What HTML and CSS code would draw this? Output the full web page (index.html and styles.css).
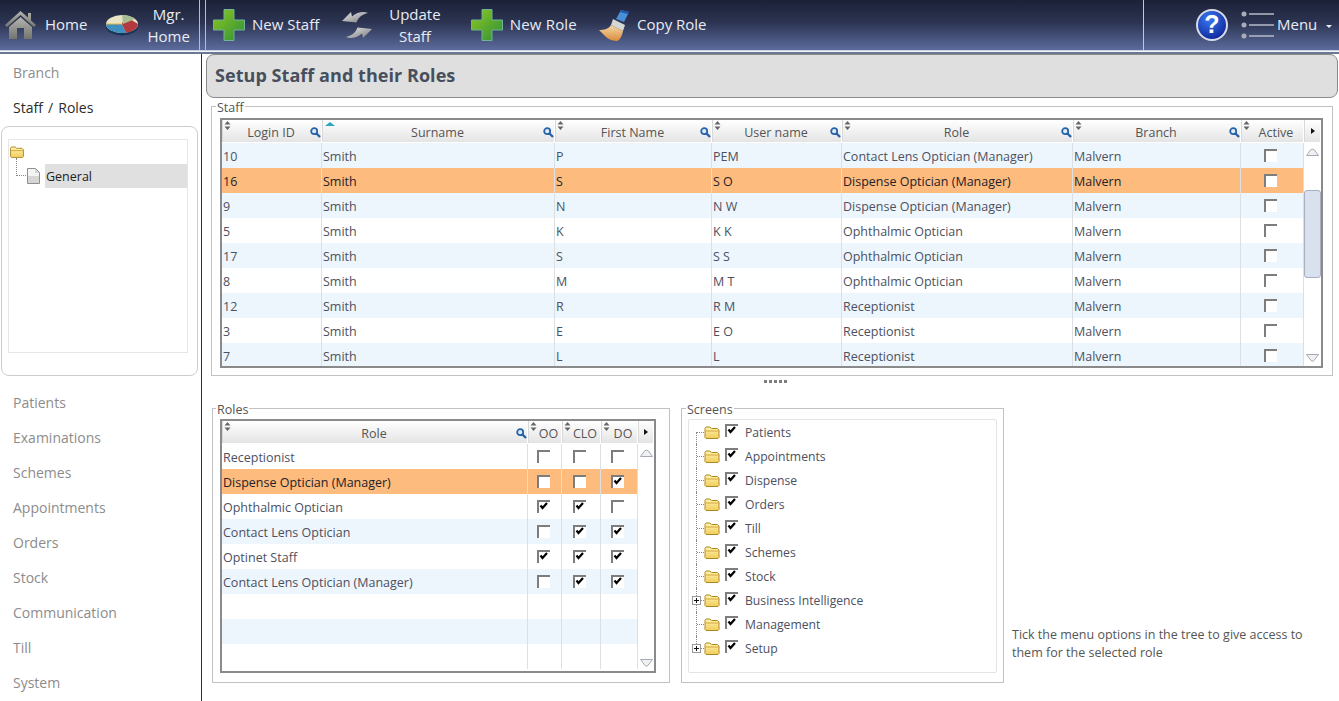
FILE: index.html
```html
<!DOCTYPE html>
<html lang="en">
<head>
<meta charset="utf-8">
<title>Setup Staff and their Roles</title>
<link rel="stylesheet" href="styles.css">
</head>
<body>
<svg class="defs" aria-hidden="true">
  <defs>
    <linearGradient id="gGreen" x1="0" y1="0" x2="1" y2="1"><stop offset="0" stop-color="#8cc820"/><stop offset="1" stop-color="#2f8f3a"/></linearGradient>
    <linearGradient id="gHome" x1="0" y1="0" x2="0" y2="1"><stop offset="0" stop-color="#b4b4b0"/><stop offset="1" stop-color="#75756f"/></linearGradient>
    <linearGradient id="gArrow" x1="0" y1="0" x2="1" y2="1"><stop offset="0" stop-color="#e8e8e8"/><stop offset="1" stop-color="#77797d"/></linearGradient>
    <linearGradient id="gFolder" x1="0" y1="0" x2="0" y2="1"><stop offset="0" stop-color="#fff3b0"/><stop offset="1" stop-color="#f2cd5c"/></linearGradient>
    <linearGradient id="gBrush" x1="0" y1="0" x2="0" y2="1"><stop offset="0" stop-color="#f4d8a8"/><stop offset="1" stop-color="#dc8c3c"/></linearGradient>
    <radialGradient id="gHelp" cx=".4" cy=".3" r=".8"><stop offset="0" stop-color="#3a78f0"/><stop offset="1" stop-color="#0a1e90"/></radialGradient>
    <symbol id="i-plus" viewBox="0 0 32 32"><path d="M11 .5h10v10.500h10.500v10H21v10.500H11V21H.5V11H11z" fill="url(#gGreen)" stroke="#6fb39a" stroke-width="1"/></symbol>
    <symbol id="i-box" viewBox="0 0 13 13"><path d="M0 0h13v13H0z" fill="#fff"/><path d="M1 13V1h12" fill="none" stroke="#7d7d7d" stroke-width="2"/></symbol>
    <symbol id="i-check" viewBox="0 0 13 13"><path d="M0 0h13v13H0z" fill="#fff"/><path d="M1 13V1h12" fill="none" stroke="#7d7d7d" stroke-width="2"/><path d="M3.500 5.500l2 2.500 4.500-5" fill="none" stroke="#000" stroke-width="2.200"/></symbol>
    <symbol id="i-folder" viewBox="0 0 16 13"><path d="M1 11.500V2.500L2 1h4l1.500 1.500h6L15 4v7.500l-1 1H2z" fill="url(#gFolder)" stroke="#b08a28"/><path d="M1.500 5h13" stroke="#d2a838" fill="none"/></symbol>
    <symbol id="i-sort" viewBox="0 0 7 9"><path d="M3.500 0L6.500 3.500H.5zM3.500 9L.5 5.500h6z" fill="#666"/></symbol>
    <symbol id="i-mag" viewBox="0 0 11 11"><circle cx="4.200" cy="4.200" r="3" fill="#dcecf8" stroke="#2a62a8" stroke-width="1.800"/><path d="M6.500 6.500l3.500 3.500" stroke="#2a62a8" stroke-width="2.400"/></symbol>
    <symbol id="i-up" viewBox="0 0 13 8"><path d="M.5 7.500L4.500 2Q6.500 0 8.500 2l4 5.500z" fill="#eef0f4" stroke="#a6a9b2"/></symbol>
    <symbol id="i-down" viewBox="0 0 13 8"><path d="M.5.500h12L8 6.500Q6.500 8 5 6.500z" fill="#eef0f4" stroke="#a6a9b2"/></symbol>
  </defs>
</svg>

<header class="topbar">
  <nav class="group group-home">
    <a class="tool tool-home">
      <svg class="icon32" viewBox="0 0 32 32"><path d="M15.500 2L0 16l2 2L15.500 6 29 18l2-2-5-4.500V4h-3v4.500z" fill="url(#gHome)"/><path d="M4 18L15.500 8 27 18v12h-8V19h-7v11H4z" fill="url(#gHome)"/></svg>
      <span>Home</span>
    </a>
    <a class="tool tool-mgr">
      <svg class="icon32" viewBox="0 0 32 32"><ellipse cx="16" cy="17.500" rx="16" ry="9" fill="#16365a"/><ellipse cx="16" cy="15" rx="16" ry="9" fill="#e9e4c6"/><path d="M16 15L0 15a16 9 0 0 0 20 8.700z" fill="#3f8fc0"/><path d="M16 15l4 8.700A16 9 0 0 0 32 15L19 7z" fill="#b23a3e"/><path d="M16 15L0 15" stroke="#e0b93c" stroke-width="1"/><path d="M16 6l1 9 12-5a16 9 0 0 0-13-4z" fill="#a9bd92"/></svg>
      <span class="two-line">Mgr.<br>Home</span>
    </a>
  </nav>
  <nav class="group group-actions">
    <a class="tool tool-newstaff"><svg class="icon32"><use href="#i-plus"/></svg><span>New Staff</span></a>
    <a class="tool tool-update">
      <svg class="icon32" viewBox="0 0 32 32"><path d="M1 12L10 3l1 4.500C16 3 23 2 27 4c-5 1-9.500 4-11.500 9.500z" fill="url(#gArrow)"/><path d="M31 20l-9 9-1-4.500C16 29 9 30 5 28c5-1 9.500-4 11.500-9.500z" fill="url(#gArrow)"/></svg>
      <span class="two-line">Update<br>Staff</span>
    </a>
    <a class="tool tool-newrole"><svg class="icon32"><use href="#i-plus"/></svg><span>New Role</span></a>
    <a class="tool tool-copy">
      <svg class="icon32" viewBox="0 0 32 32"><path d="M22 1l8 2-5 10-8-3z" fill="#4a90d8"/><path d="M22 1l8 2-1 2-8-2z" fill="#1f56a8"/><path d="M14 10l12 6-2 6-12-6z" fill="#d6d6d4"/><path d="M12 16l12 6c-1 5-3 9-6 10-6 0-10-3-12-5L0 21c5 0 10-1 12-5z" fill="url(#gBrush)"/></svg>
      <span>Copy Role</span>
    </a>
  </nav>
  <nav class="group group-right">
    <svg class="help" viewBox="0 0 32 32"><circle cx="16" cy="16" r="15" fill="url(#gHelp)" stroke="#d8dce8" stroke-width="2"/><text x="16" y="24" text-anchor="middle" class="help-q">?</text></svg>
    <svg class="menu-icon" viewBox="0 0 33 28"><g fill="#a9adb8"><circle cx="3" cy="3" r="2.500"/><circle cx="3" cy="14" r="2.500"/><circle cx="3" cy="25" r="2.500"/></g><g stroke="#b6bac6" stroke-width="1.500"><path d="M8 3h25M8 14h25M8 25h25"/></g></svg>
    <span class="menu-label">Menu</span>
    <span class="caret"></span>
  </nav>
</header>
<div class="rule"></div>

<div class="page">
  <aside class="sidebar">
    <a class="side-item">Branch</a>
    <a class="side-item active">Staff / Roles</a>
    <div class="side-panel">
      <div class="side-tree">
        <svg class="side-folder"><use href="#i-folder"/></svg>
        <div class="side-node">
          <span class="side-elbow"></span>
          <svg class="side-page" viewBox="0 0 13 16"><path d="M.5.5h8l4 4v11H.5z" fill="#d6d6d6" stroke="#8f8f8f"/><path d="M1 1h7v4h4v3H1z" fill="#f4f4f4"/></svg>
          <span class="side-label">General</span>
        </div>
      </div>
    </div>
    <div class="side-rest">
      <a class="side-item">Patients</a>
      <a class="side-item">Examinations</a>
      <a class="side-item">Schemes</a>
      <a class="side-item">Appointments</a>
      <a class="side-item">Orders</a>
      <a class="side-item">Stock</a>
      <a class="side-item">Communication</a>
      <a class="side-item">Till</a>
      <a class="side-item">System</a>
    </div>
  </aside>

  <main class="content">
    <h1 class="title">Setup Staff and their Roles</h1>

    <fieldset class="box box-staff">
      <legend>Staff</legend>
      <div class="grid grid-staff">
        <div class="head staff-cols">
          <div class="hc"><svg class="sort"><use href="#i-sort"/></svg>Login ID<svg class="mag"><use href="#i-mag"/></svg></div>
          <div class="hc"><span class="sort-up"></span>Surname<svg class="mag"><use href="#i-mag"/></svg></div>
          <div class="hc"><svg class="sort"><use href="#i-sort"/></svg>First Name<svg class="mag"><use href="#i-mag"/></svg></div>
          <div class="hc"><svg class="sort"><use href="#i-sort"/></svg>User name<svg class="mag"><use href="#i-mag"/></svg></div>
          <div class="hc"><svg class="sort"><use href="#i-sort"/></svg>Role<svg class="mag"><use href="#i-mag"/></svg></div>
          <div class="hc"><svg class="sort"><use href="#i-sort"/></svg>Branch<svg class="mag"><use href="#i-mag"/></svg></div>
          <div class="hc hc-narrow"><svg class="sort"><use href="#i-sort"/></svg>Active</div>
          <div class="hc hc-more"><span class="more"></span></div>
        </div>
        <div class="body">
          <div class="rows rows-staff">
            <div class="row staff-cols"><span>10</span><span>Smith</span><span>P</span><span>PEM</span><span>Contact Lens Optician (Manager)</span><span>Malvern</span><span class="cb"><svg class="chk"><use href="#i-box"/></svg></span></div>
            <div class="row staff-cols sel"><span>16</span><span>Smith</span><span>S</span><span>S O</span><span>Dispense Optician (Manager)</span><span>Malvern</span><span class="cb"><svg class="chk"><use href="#i-box"/></svg></span></div>
            <div class="row staff-cols"><span>9</span><span>Smith</span><span>N</span><span>N W</span><span>Dispense Optician (Manager)</span><span>Malvern</span><span class="cb"><svg class="chk"><use href="#i-box"/></svg></span></div>
            <div class="row staff-cols"><span>5</span><span>Smith</span><span>K</span><span>K K</span><span>Ophthalmic Optician</span><span>Malvern</span><span class="cb"><svg class="chk"><use href="#i-box"/></svg></span></div>
            <div class="row staff-cols"><span>17</span><span>Smith</span><span>S</span><span>S S</span><span>Ophthalmic Optician</span><span>Malvern</span><span class="cb"><svg class="chk"><use href="#i-box"/></svg></span></div>
            <div class="row staff-cols"><span>8</span><span>Smith</span><span>M</span><span>M T</span><span>Ophthalmic Optician</span><span>Malvern</span><span class="cb"><svg class="chk"><use href="#i-box"/></svg></span></div>
            <div class="row staff-cols"><span>12</span><span>Smith</span><span>R</span><span>R M</span><span>Receptionist</span><span>Malvern</span><span class="cb"><svg class="chk"><use href="#i-box"/></svg></span></div>
            <div class="row staff-cols"><span>3</span><span>Smith</span><span>E</span><span>E O</span><span>Receptionist</span><span>Malvern</span><span class="cb"><svg class="chk"><use href="#i-box"/></svg></span></div>
            <div class="row staff-cols"><span>7</span><span>Smith</span><span>L</span><span>L</span><span>Receptionist</span><span>Malvern</span><span class="cb"><svg class="chk"><use href="#i-box"/></svg></span></div>
          </div>
          <div class="scroll">
            <svg class="arrow"><use href="#i-up"/></svg>
            <span class="thumb"></span>
            <svg class="arrow arrow-end"><use href="#i-down"/></svg>
          </div>
        </div>
      </div>
    </fieldset>

    <div class="splitter"><span class="grip"></span></div>

    <div class="lower">
      <fieldset class="box box-roles">
        <legend>Roles</legend>
        <div class="grid grid-roles">
          <div class="head role-cols">
            <div class="hc"><svg class="sort"><use href="#i-sort"/></svg>Role<svg class="mag"><use href="#i-mag"/></svg></div>
            <div class="hc hc-narrow"><svg class="sort"><use href="#i-sort"/></svg>OO</div>
            <div class="hc hc-narrow"><svg class="sort"><use href="#i-sort"/></svg>CLO</div>
            <div class="hc hc-narrow"><svg class="sort"><use href="#i-sort"/></svg>DO</div>
            <div class="hc hc-more"><span class="more"></span></div>
          </div>
          <div class="body">
            <div class="rows rows-roles">
              <div class="row role-cols"><span>Receptionist</span><span class="cb"><svg class="chk"><use href="#i-box"/></svg></span><span class="cb"><svg class="chk"><use href="#i-box"/></svg></span><span class="cb"><svg class="chk"><use href="#i-box"/></svg></span></div>
              <div class="row role-cols sel"><span>Dispense Optician (Manager)</span><span class="cb"><svg class="chk"><use href="#i-box"/></svg></span><span class="cb"><svg class="chk"><use href="#i-box"/></svg></span><span class="cb"><svg class="chk"><use href="#i-check"/></svg></span></div>
              <div class="row role-cols"><span>Ophthalmic Optician</span><span class="cb"><svg class="chk"><use href="#i-check"/></svg></span><span class="cb"><svg class="chk"><use href="#i-check"/></svg></span><span class="cb"><svg class="chk"><use href="#i-box"/></svg></span></div>
              <div class="row role-cols"><span>Contact Lens Optician</span><span class="cb"><svg class="chk"><use href="#i-box"/></svg></span><span class="cb"><svg class="chk"><use href="#i-check"/></svg></span><span class="cb"><svg class="chk"><use href="#i-check"/></svg></span></div>
              <div class="row role-cols"><span>Optinet Staff</span><span class="cb"><svg class="chk"><use href="#i-check"/></svg></span><span class="cb"><svg class="chk"><use href="#i-check"/></svg></span><span class="cb"><svg class="chk"><use href="#i-check"/></svg></span></div>
              <div class="row role-cols"><span>Contact Lens Optician (Manager)</span><span class="cb"><svg class="chk"><use href="#i-box"/></svg></span><span class="cb"><svg class="chk"><use href="#i-check"/></svg></span><span class="cb"><svg class="chk"><use href="#i-check"/></svg></span></div>
              <div class="row role-cols"><span></span><span></span><span></span><span></span></div>
              <div class="row role-cols"><span></span><span></span><span></span><span></span></div>
              <div class="row role-cols"><span></span><span></span><span></span><span></span></div>
            </div>
            <div class="scroll">
              <svg class="arrow"><use href="#i-up"/></svg>
              <svg class="arrow arrow-end"><use href="#i-down"/></svg>
            </div>
          </div>
        </div>
      </fieldset>

      <fieldset class="box box-screens">
        <legend>Screens</legend>
        <ul class="tree">
          <li class="node"><span class="elbow"></span><svg class="folder"><use href="#i-folder"/></svg><svg class="chk"><use href="#i-check"/></svg><span class="node-label">Patients</span></li>
          <li class="node"><span class="elbow"></span><svg class="folder"><use href="#i-folder"/></svg><svg class="chk"><use href="#i-check"/></svg><span class="node-label">Appointments</span></li>
          <li class="node"><span class="elbow"></span><svg class="folder"><use href="#i-folder"/></svg><svg class="chk"><use href="#i-check"/></svg><span class="node-label">Dispense</span></li>
          <li class="node"><span class="elbow"></span><svg class="folder"><use href="#i-folder"/></svg><svg class="chk"><use href="#i-check"/></svg><span class="node-label">Orders</span></li>
          <li class="node"><span class="elbow"></span><svg class="folder"><use href="#i-folder"/></svg><svg class="chk"><use href="#i-check"/></svg><span class="node-label">Till</span></li>
          <li class="node"><span class="elbow"></span><svg class="folder"><use href="#i-folder"/></svg><svg class="chk"><use href="#i-check"/></svg><span class="node-label">Schemes</span></li>
          <li class="node"><span class="elbow"></span><svg class="folder"><use href="#i-folder"/></svg><svg class="chk"><use href="#i-check"/></svg><span class="node-label">Stock</span></li>
          <li class="node"><span class="elbow"><span class="plus"></span></span><svg class="folder"><use href="#i-folder"/></svg><svg class="chk"><use href="#i-check"/></svg><span class="node-label">Business Intelligence</span></li>
          <li class="node"><span class="elbow"></span><svg class="folder"><use href="#i-folder"/></svg><svg class="chk"><use href="#i-check"/></svg><span class="node-label">Management</span></li>
          <li class="node"><span class="elbow"><span class="plus"></span></span><svg class="folder"><use href="#i-folder"/></svg><svg class="chk"><use href="#i-check"/></svg><span class="node-label">Setup</span></li>
        </ul>
      </fieldset>

      <p class="hint">Tick the menu options in the tree to give access to them for the selected role</p>
    </div>
  </main>
</div>
</body>
</html>
```

FILE: styles.css
```css
* { box-sizing: border-box; }

html, body {
  margin: 0;
  height: 701px;
  overflow: hidden;
  background: #fff;
  font-family: "Open Sans", "Noto Sans", sans-serif;
  font-size: 12.5px;
  color: #4d5060;
}

.defs { position: absolute; width: 0; height: 0; }

/* top bar */
.topbar {
  display: flex;
  height: 50px;
  background: linear-gradient(#1c2137, #2c3452 45%, #5b6b9c);
  color: #e8ecf4;
  font-size: 15px;
}
.rule {
  height: 4px;
  background: linear-gradient(#c8d0e2 0 1px, #f4f6fa 1px 2px, #6c7892 2px);
}
.group { display: flex; align-items: center; height: 50px; }
.group-home { width: 200px; padding-left: 5px; border-right: 1px solid #b7bdd0; }
.group-actions { width: 938px; margin-left: 5px; padding-left: 7px; border-left: 1px solid #b7bdd0; }
.group-right { flex: 1; border-left: 1px solid #c3c8d6; padding-left: 52px; }
.tool { display: flex; align-items: center; gap: 8px; }
.tool > span:not(.two-line) { margin-top: -2px; }
.icon32 { width: 32px; height: 32px; flex: none; }
.two-line { text-align: center; line-height: 22px; }
.tool-mgr { margin-left: 19px; gap: 9px; }
.tool-newstaff { gap: 7px; }
.tool-update { margin-left: 22px; gap: 16px; }
.tool-newrole { margin-left: 30px; gap: 7px; letter-spacing: .2px; }
.tool-copy { margin-left: 22px; gap: 6px; }
.help { width: 32px; height: 32px; }
.help-q { font: bold 25px "Liberation Sans", sans-serif; fill: #fff; }
.menu-icon { width: 33px; height: 28px; margin-left: 13px; }
.menu-label { margin-left: 3px; margin-top: -2px; }
.caret {
  margin-left: 9px;
  margin-top: 2px;
  border-left: 3px solid transparent;
  border-right: 3px solid transparent;
  border-top: 3px solid #e8ecf4;
}

/* page */
.page { display: flex; height: 647px; }

.sidebar {
  width: 202px;
  flex: none;
  border-right: 1px solid #2b3040;
  padding-top: 1px;
}
.side-item {
  display: flex;
  align-items: center;
  height: 35px;
  padding-left: 13px;
  font-size: 14px;
  word-spacing: 1.5px;
  color: #8c8c8c;
}
.side-item.active { color: #2b2b2b; }
.side-panel {
  width: 197px;
  height: 250px;
  margin: 1px 0 0 1px;
  padding: 12px 9px 22px 6px;
  border: 1px solid #cdcdcd;
  border-radius: 8px;
}
.side-tree {
  height: 100%;
  border: 1px solid #e6e6e6;
  padding-top: 6px;
}
.side-folder { display: block; width: 16px; height: 12px; }
.side-node {
  display: flex;
  align-items: center;
  height: 24px;
  margin-top: 6px;
  position: relative;
  padding-left: 18px;
}
.side-elbow {
  position: absolute;
  left: 7px;
  top: -6px;
  width: 10px;
  height: 18px;
  border-left: 1px dotted #888;
  border-bottom: 1px dotted #888;
}
.side-page { width: 13px; height: 16px; flex: none; }
.side-label {
  flex: 1;
  height: 24px;
  line-height: 26px;
  margin-left: 5px;
  padding-left: 1px;
  background: #e0e0e0;
  color: #222;
}
.side-rest { margin-top: 9px; }

/* main */
.content { flex: 1; min-width: 0; padding: 0 1px 0 4px; }
.title {
  display: flex;
  align-items: center;
  height: 44px;
  margin: 0 0 1px;
  padding: 0 0 2px 8px;
  background: #dfdfdf;
  border: 1px solid #8b8b8b;
  border-radius: 8px;
  font-size: 18px;
  letter-spacing: .05px;
  font-weight: 700;
  color: #474f5c;
}

.box {
  margin: 0;
  padding: 4px 0 0 8px;
  border: 1px solid #c2c2c2;
  min-width: 0;
}
.box legend {
  margin-left: -4px;
  padding: 2px 1px 0;
  font-size: 12.500px;
  line-height: 13px;
  color: #555;
}
.box-staff { height: 277px; margin-left: 5px; margin-right: 5px; }

.grid { border: 2px solid #8a8a8a; }
.grid-staff { width: 1103px; height: 250px; }
.grid-roles { width: 436px; height: 254px; }

.head { height: 22px; }
.staff-cols { display: grid; grid-template-columns: 100px 233px 157px 130px 231px 168px 63px 17px; }
.rows .staff-cols { grid-template-columns: 100px 233px 157px 130px 231px 168px 63px; }
.role-cols { display: grid; grid-template-columns: 306px 34px 39px 37px 16px; }
.rows .role-cols { grid-template-columns: 306px 34px 39px 37px; }

.hc {
  position: relative;
  display: flex;
  align-items: flex-end;
  justify-content: center;
  padding: 0 2px 1px 0;
  background: linear-gradient(#fff, #e4e4e4);
  border-right: 1px solid #fff;
  border-left: 1px solid #d8d8d8;
  color: #555;
  line-height: 17px;
  white-space: nowrap;
}
.hc-narrow { padding: 0 0 1px 7px; }
.sort { position: absolute; left: 1px; top: 1px; width: 7px; height: 9px; }
.mag { position: absolute; right: 0; bottom: 4px; width: 11px; height: 11px; }
.sort-up {
  position: absolute;
  left: 2px;
  top: 2px;
  border-left: 5px solid transparent;
  border-right: 5px solid transparent;
  border-bottom: 4px solid #28a9bd;
}
.hc-more { align-items: center; padding: 0; }
.more {
  border-top: 3px solid transparent;
  border-bottom: 3px solid transparent;
  border-left: 4px solid #111;
}

.body { display: flex; height: calc(100% - 22px); overflow: hidden; }
.rows { overflow: hidden; }
.rows-staff { width: 1082px; padding-top: 1px; }
.rows-roles { width: 416px; padding-top: 1px; }
.row {
  height: 25px;
  grid-template-rows: 25px;
  line-height: 27px;
  color: #4d5060;
  background: #fff;
}
.rows-staff .row:nth-child(odd) { background: #eef6fd; }
.rows-roles .row:nth-child(even) { background: #eef6fd; }
.rows .row.sel { background: #fdbb7e; color: #22222a; }
.row > span {
  display: block;
  min-width: 0;
  padding-left: 1px;
  white-space: nowrap;
  overflow: hidden;
  border-right: 1px solid #dcdfe3;
}
.row > .cb { display: flex; align-items: center; justify-content: center; padding: 0 3px 0 0; }
.chk { width: 13px; height: 13px; flex: none; display: block; }

.scroll {
  flex: 1;
  display: flex;
  flex-direction: column;
  align-items: center;
  padding: 6px 0 4px;
}
.arrow { width: 13px; height: 8px; flex: none; }
.arrow-end { margin-top: auto; }
.thumb {
  width: 17px;
  height: 88px;
  margin-top: 34px;
  background: #d9e1ee;
  border: 1px solid #a9afbd;
  border-radius: 3px;
}

.splitter { height: 25px; padding-top: 4px; display: flex; justify-content: center; margin-left: 6px; }
.grip {
  width: 23px;
  height: 3px;
  background: repeating-linear-gradient(90deg, #7d7d7d 0 3px, transparent 3px 5px);
}

.lower { display: flex; align-items: flex-start; }
.box-roles { width: 458px; height: 282px; margin-left: 6px; padding: 3px 0 0 7px; }
.box-screens { width: 323px; height: 282px; margin-left: 11px; padding: 3px 0 0 6px; }
.box-screens legend { margin-left: -2px; }

.tree {
  list-style: none;
  margin: 0;
  padding: 0 0 0 7px;
  width: 309px;
  height: 254px;
  border: 1px solid #e4e4e4;
  border-radius: 2px;
}
.node {
  display: flex;
  align-items: center;
  height: 24px;
  position: relative;
  color: #4d5060;
}
.elbow {
  position: relative;
  width: 8px;
  height: 24px;
  flex: none;
}
.elbow::before {
  content: "";
  position: absolute;
  left: 0;
  top: 0;
  bottom: 0;
  border-left: 1px dotted #888;
}
.elbow::after {
  content: "";
  position: absolute;
  left: 1px;
  right: 0;
  top: 12px;
  border-top: 1px dotted #888;
}
.node:first-child .elbow::before { top: 12px; }
.node:last-child .elbow::before { bottom: 12px; }
.plus {
  position: absolute;
  z-index: 1;
  left: -4px;
  top: 8px;
  width: 9px;
  height: 9px;
  border: 1px solid #999;
  background:
    linear-gradient(#111, #111) center / 5px 1px no-repeat,
    linear-gradient(#111, #111) center / 1px 5px no-repeat,
    #fff;
}
.folder { width: 16px; height: 13px; flex: none; }
.node .chk { margin: -3px 0 0 5px; }
.node-label { margin-left: 7px; font-size: 12.2px; }

.hint {
  width: 310px;
  margin: 225px 0 0 8px;
  line-height: 18px;
  color: #555;
}
```
